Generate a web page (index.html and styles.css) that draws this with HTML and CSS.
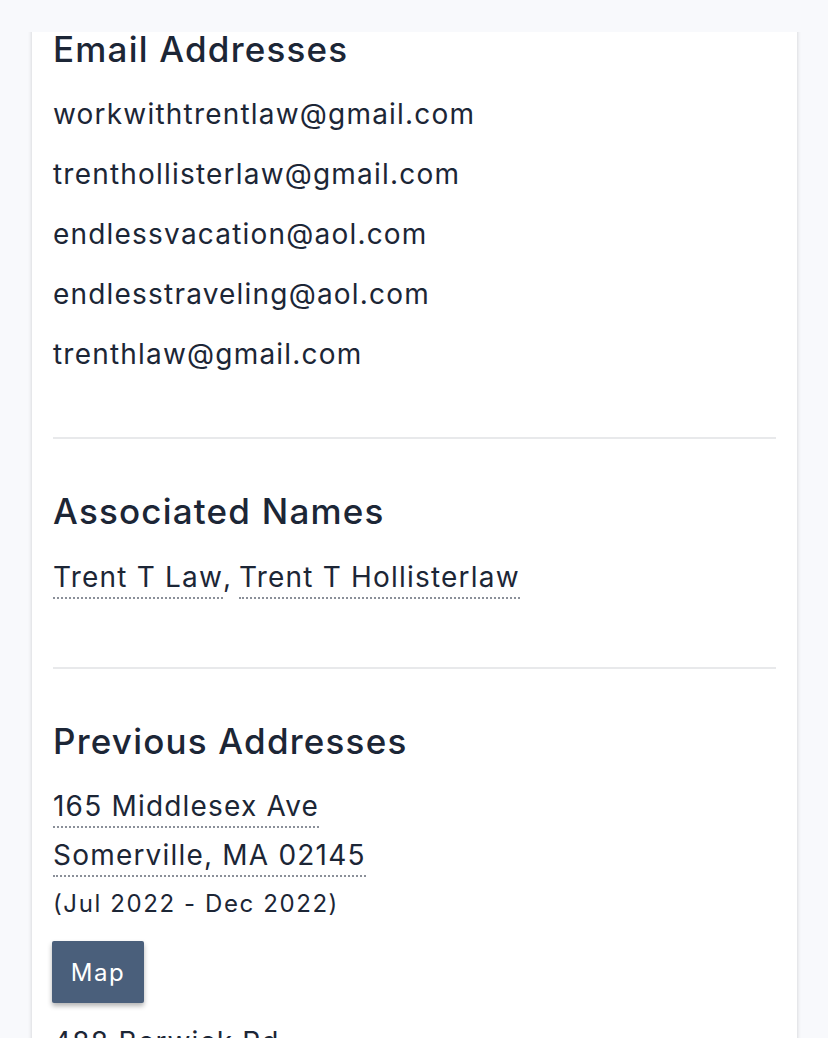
FILE: index.html
```html
<!DOCTYPE html>
<html lang="en">
<head>
  <meta charset="UTF-8" />
  <meta name="viewport" content="width=device-width, initial-scale=1.0"/>
  <title>Trent T Law - Profile</title>
  <link rel="stylesheet" href="styles.css">
</head>

<body>
  <div class="topbar"></div>

  <div class="card">

    <div class="section emails">
      <h2>Email Addresses</h2>
      <ul class="list">
        <li>workwithtrentlaw@gmail.com</li>
        <li>trenthollisterlaw@gmail.com</li>
        <li>endlessvacation@aol.com</li>
        <li>endlesstraveling@aol.com</li>
        <li>trenthlaw@gmail.com</li>
      </ul>
    </div>

    <div class="section names">
      <h2>Associated Names</h2>
      <div class="name-row">
        <a class="dotted" href="#">Trent T Law</a>, <a class="dotted" href="#">Trent T Hollisterlaw</a>
      </div>
    </div>

    <div class="section addresses">
      <h2>Previous Addresses</h2>

      <div class="address">
        <a class="dotted" href="#">165 Middlesex Ave</a>
        <a class="dotted" href="#">Somerville, MA 02145</a>
        <div class="dates">(Jul 2022 - Dec 2022)</div>
        <button class="map-btn" type="button">Map</button>
      </div>

      <div class="address">
        <a class="dotted" href="#">488 Berwick Rd</a>
        <a class="dotted" href="#">Medford, MA 02155</a>
      </div>
    </div>

  </div>
</body>
</html>
```

FILE: styles.css
```css
* {
  box-sizing: border-box;
}

body {
  margin: 0;
  padding: 0;
  background: #f8f9fc;
  font-family: 'Inter', 'Roboto', sans-serif;
  color: #1c2636;
}

/* sticky strip over the scrolled card */
.topbar {
  position: fixed;
  top: 0;
  left: 0;
  right: 0;
  height: 32px;
  background: #f8f9fc;
  z-index: 10;
}

.card {
  margin: 0 31px 0 32px;
  padding: 29px 21px 40px;
  background: #fff;
  box-shadow: 0 0 4px rgba(0, 0, 0, 0.18);
}

.section {
  border-bottom: 2px solid #e8e9eb;
}

.section h2 {
  margin: 0;
  font-size: 35px;
  line-height: 40px;
  font-weight: 500;
  letter-spacing: 1.2px;
}

.emails {
  padding-bottom: 53px;
}

.list {
  list-style: none;
  margin: 15px 0 0;
  padding: 0;
}

.list li {
  font-size: 28px;
  line-height: 60px;
  letter-spacing: 1.2px;
}

.names {
  padding-top: 52px;
  padding-bottom: 68px;
}

.name-row {
  margin-top: 29px;
  font-size: 28px;
  line-height: 34px;
}

.dotted {
  display: inline-block;
  color: inherit;
  text-decoration: none;
  font-size: 28px;
  line-height: 34px;
  letter-spacing: 1.2px;
  padding-bottom: 3px;
  border-bottom: 2px dotted #8b9099;
}

.addresses {
  padding-top: 52px;
  border-bottom: none;
}

.address {
  display: flex;
  flex-direction: column;
  align-items: flex-start;
  gap: 10px;
  margin-top: 28px;
}

.address + .address {
  margin-top: 22px;
}

.dates {
  margin-top: 2px;
  font-size: 24px;
  line-height: 30px;
  letter-spacing: 1.6px;
}

.map-btn {
  margin-top: 12px;
  margin-left: -1px;
  width: 92px;
  height: 62px;
  border: none;
  border-radius: 2px;
  background: #4a5f7b;
  color: #fff;
  font-family: inherit;
  font-size: 24px;
  letter-spacing: 1.5px;
  box-shadow: 0 3px 5px rgba(0, 0, 0, 0.3);
  cursor: pointer;
}
```
